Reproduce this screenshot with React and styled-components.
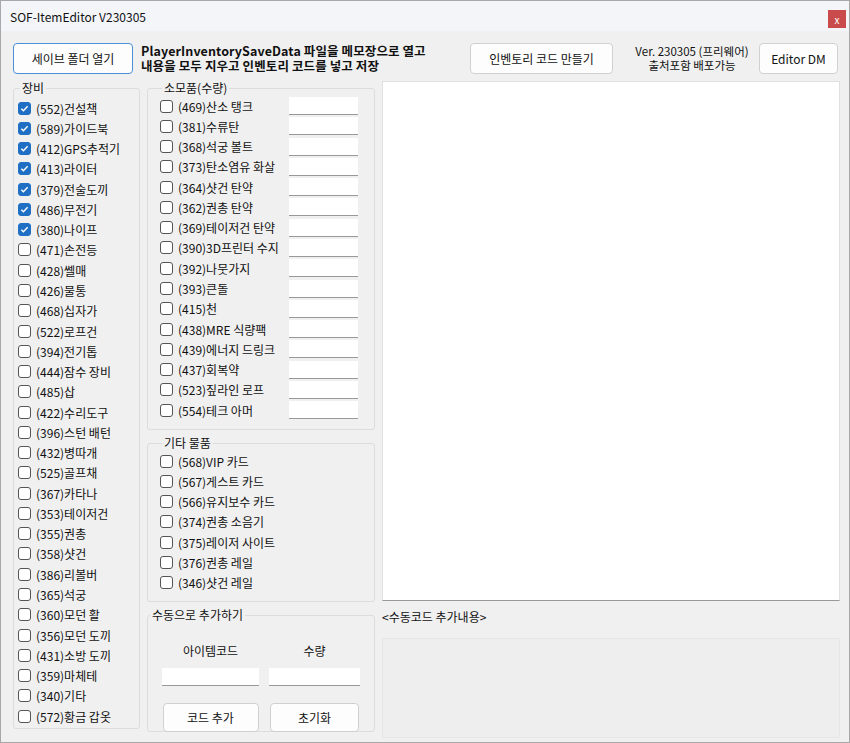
import React from "react";
import styled, { createGlobalStyle } from "styled-components";

const G = createGlobalStyle`
  html,body{margin:0;padding:0;background:#f0f0f0;}
  body{font-family:"Noto Sans CJK KR","Noto Sans",sans-serif;font-size:12px;color:#111;}
`;
const Win = styled.div`width:850px;height:743px;box-sizing:border-box;border:1px solid #a8a8a8;background:#f0f0f0;display:flex;flex-direction:column;overflow:hidden;`;
const Title = styled.div`height:30px;background:#f3f5f9;display:flex;align-items:center;justify-content:space-between;padding:0 3px 0 9px;font-size:12px;`;
const Close = styled.div`width:18px;height:18px;background:#c94b4b;color:#fff;font-size:10px;display:flex;align-items:center;justify-content:center;margin-top:6px;`;
const Top = styled.div`display:flex;align-items:center;height:32px;margin-top:11px;padding-left:12px;`;
const Btn = styled.button`width:${p=>p.w}px;height:${p=>p.h||31}px;background:#fdfdfd;border:1px solid ${p=>p.hl?"#4a90d9":"#d0d0d0"};border-radius:4px;font-family:inherit;font-size:12px;color:#111;padding:0;flex-shrink:0;`;
const Bold = styled.div`font-weight:700;font-size:12.5px;line-height:15px;margin-left:8px;width:320px;letter-spacing:0.1px;`;
const Ver = styled.div`font-size:11.5px;line-height:14px;text-align:center;width:116px;margin:0 9px 0 21px;`;
const Main = styled.div`display:flex;margin-top:7px;padding-left:12px;gap:7px;`;
const Field = styled.fieldset`margin:0;border:1px solid #dcdcdc;border-radius:3px;padding:${p=>p.pad||"3px 0 0 4px"};width:${p=>p.w}px;height:${p=>p.h}px;box-sizing:border-box;min-width:0;
  legend{padding:0 2px;margin-left:2px;font-size:12px;line-height:14px;}`;
const Col = styled.div`display:flex;flex-direction:column;gap:${p=>p.gap||0}px;`;
const Row = styled.div`display:flex;align-items:center;height:20.27px;font-size:12px;`;
const Box = styled.span`width:13px;height:13px;box-sizing:border-box;border-radius:3px;margin-right:5px;flex-shrink:0;
  background:${p=>p.on?"#1f6fc4":"#fff"};border:1px solid ${p=>p.on?"#1f6fc4":"#555"};display:flex;align-items:center;justify-content:center;`;
const Label = styled.span`flex:1;white-space:nowrap;`;
const Inp = styled.div`width:${p=>p.w||69}px;height:18px;background:#fff;border-bottom:1px solid #999;box-sizing:border-box;margin-right:${p=>p.mr??16}px;`;
const Right = styled.div`display:flex;flex-direction:column;width:458px;`;
const Area = styled.div`height:520px;background:#fff;border:1px solid #e0e0e0;border-bottom:1px solid #999;box-sizing:border-box;`;
const Cap = styled.div`margin-top:7px;height:16px;font-size:12px;`;
const Gray = styled.div`margin-top:14px;height:98px;border:1px solid #e6e6e6;background:#eeeeee;`;
const Manual = styled.div`display:grid;grid-template-columns:97px 91px;column-gap:10px;padding:20px 0 0 14px;justify-items:center;row-gap:0;
  & > span{height:26px;}
  & > button{margin-top:17px;}`;

const Check = ({on}) => <Box on={on}>{on && <svg width="9" height="9" viewBox="0 0 10 10"><path d="M1.5 5.2l2.3 2.3 4.7-5" stroke="#fff" strokeWidth="1.6" fill="none"/></svg>}</Box>;

const equip = ["(552)건설책","(589)가이드북","(412)GPS추적기","(413)라이터","(379)전술도끼","(486)무전기","(380)나이프","(471)손전등","(428)쎌매","(426)물통","(468)십자가","(522)로프건","(394)전기톱","(444)잠수 장비","(485)삽","(422)수리도구","(396)스턴 배턴","(432)병따개","(525)골프채","(367)카타나","(353)테이저건","(355)권총","(358)샷건","(386)리볼버","(365)석궁","(360)모던 활","(356)모던 도끼","(431)소방 도끼","(359)마체테","(340)기타","(572)황금 갑옷"];
const cons = ["(469)산소 탱크","(381)수류탄","(368)석궁 볼트","(373)탄소염유 화살","(364)샷건 탄약","(362)권총 탄약","(369)테이저건 탄약","(390)3D프린터 수지","(392)나뭇가지","(393)큰돌","(415)천","(438)MRE 식량팩","(439)에너지 드링크","(437)회복약","(523)짚라인 로프","(554)테크 아머"];
const etc = ["(568)VIP 카드","(567)게스트 카드","(566)유지보수 카드","(374)권총 소음기","(375)레이저 사이트","(376)권총 레일","(346)샷건 레일"];

export default function App(){
  return <Win><G/>
    <Title><span>SOF-ItemEditor V230305</span><Close>x</Close></Title>
    <Top>
      <Btn w={120} hl>세이브 폴더 열기</Btn>
      <Bold>PlayerInventorySaveData 파일을 메모장으로 열고<br/>내용을 모두 지우고 인벤토리 코드를 넣고 저장</Bold>
      <Btn w={143} style={{marginLeft:9}}>인벤토리 코드 만들기</Btn>
      <Ver>Ver. 230305 (프리웨어)<br/>출처포함 배포가능</Ver>
      <Btn w={79}>Editor DM</Btn>
    </Top>
    <Main>
      <Field w={127} h={648}><legend>장비</legend>
        {equip.map((t,i)=><Row key={t}><Check on={i<7}/><Label>{t}</Label></Row>)}
      </Field>
      <Col gap={6}>
        <Field w={228} h={349} pad="1px 0 0 12px"><legend>소모품(수량)</legend>
          {cons.map(t=><Row key={t}><Check/><Label>{t}</Label><Inp/></Row>)}
        </Field>
        <Field w={228} h={166} pad="1px 0 0 12px"><legend>기타 물품</legend>
          {etc.map(t=><Row key={t}><Check/><Label>{t}</Label></Row>)}
        </Field>
        <Field w={228} h={124} pad="0"><legend>수동으로 추가하기</legend>
          <Manual>
            <span>아이템코드</span><span>수량</span>
            <Inp w={97} mr={0}/><Inp w={91} mr={0}/>
            <Btn w={96} h={29}>코드 추가</Btn><Btn w={89} h={29}>초기화</Btn>
          </Manual>
        </Field>
      </Col>
      <Right><Area/><Cap>&lt;수동코드 추가내용&gt;</Cap><Gray/></Right>
    </Main>
  </Win>;
}
